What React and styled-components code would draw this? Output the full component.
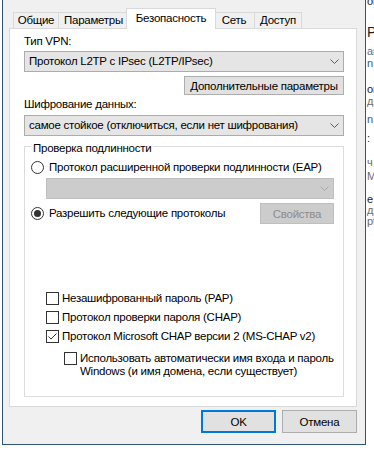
import React from "react";
import styled, { createGlobalStyle } from "styled-components";

const tabs = [
  { title: "Общие", width: 46, shift: 0 },
  { title: "Параметры", width: 71, shift: -1 },
  { title: "Безопасность", width: 90, shift: -3, active: true },
  { title: "Сеть", width: 42, shift: -3 },
  { title: "Доступ", width: 48, shift: -1 }
];

const protocols = [
  { label: "Незашифрованный пароль (PAP)" },
  { label: "Протокол проверки пароля (CHAP)" },
  { label: "Протокол Microsoft CHAP версии 2 (MS-CHAP v2)", checked: true }
];

// bits of the window that lies behind the dialog
const backdrop = [
  { text: "ol", gap: -4, tone: "dark" },
  { text: "PN", gap: 18, tone: "dark", big: true },
  { text: "ай", gap: 7, tone: "grey" },
  { text: "n U", gap: 1, tone: "blue" },
  { text: "ов", gap: 15, tone: "dark" },
  { text: "ди", gap: 1, tone: "grey" },
  { text: "n V", gap: 7, tone: "blue" },
  { text: ":", gap: 8, tone: "dark" },
  { text: "ч", gap: 13, tone: "grey" },
  { text: "Mi", gap: 3, tone: "grey" },
  { text: "е", gap: 12, tone: "dark" },
  { text: "ди", gap: 0, tone: "grey" },
  { text: "pt", gap: 0, tone: "grey" }
];

const tones = { dark: "#1b1b1b", grey: "#6b6b6b", blue: "#2f5f8e" };

const Chevron = ({ disabled }) => (
  <svg width="9" height="5" viewBox="0 0 9 5">
    <polyline
      points="0.5,0.5 4.5,4.5 8.5,0.5"
      fill="none"
      stroke={disabled ? "#a8a8a8" : "#5a5a5a"}
      strokeWidth="1"
    />
  </svg>
);

const Combo = ({ value, disabled }) => (
  <ComboBox disabled={disabled}>
    <ComboText>{value}</ComboText>
    <Chevron disabled={disabled} />
  </ComboBox>
);

const CheckBox = ({ checked }) => (
  <Box>
    {checked && (
      <svg width="11" height="11" viewBox="0 0 11 11">
        <polyline
          points="1.5,5.5 4,8 9.5,2.5"
          fill="none"
          stroke="#333"
          strokeWidth="1"
        />
      </svg>
    )}
  </Box>
);

export default function App() {
  return (
    <>
      <GlobalStyle />
      <Screen>
        <Dialog>
          <TabStrip>
            {tabs.map(tab => (
              <Tab
                key={tab.title}
                $width={tab.width}
                $shift={tab.shift}
                $active={tab.active}
              >
                {tab.title}
              </Tab>
            ))}
          </TabStrip>

          <Panel>
            <Label>Тип VPN:</Label>
            <Combo value="Протокол L2TP с IPsec (L2TP/IPsec)" />
            <Button $width={160} $height={19} $gap={4} $right>
              Дополнительные параметры
            </Button>
            <Label $gap={2}>Шифрование данных:</Label>
            <Gap $h={3} />
            <Combo value="самое стойкое (отключиться, если нет шифрования)" />

            <Group>
              <Legend>Проверка подлинности</Legend>
              <OptionRow $gap={6}>
                <Radio />
                <OptionText>
                  Протокол расширенной проверки подлинности (EAP)
                </OptionText>
              </OptionRow>
              <Indent $gap={3}>
                <Combo disabled value="" />
              </Indent>
              <PairRow>
                <OptionRow>
                  <Radio $checked />
                  <OptionText>Разрешить следующие протоколы</OptionText>
                </OptionRow>
                <Button $width={74} $height={21} disabled>
                  Свойства
                </Button>
              </PairRow>

              <CheckList>
                {protocols.map(p => (
                  <CheckRow key={p.label}>
                    <CheckBox checked={p.checked} />
                    <CheckText>{p.label}</CheckText>
                  </CheckRow>
                ))}
                <CheckRow $nested>
                  <CheckBox />
                  <CheckText $wrap>
                    Использовать автоматически имя входа и пароль
                    <br />
                    Windows (и имя домена, если существует)
                  </CheckText>
                </CheckRow>
              </CheckList>
            </Group>
          </Panel>

          <Footer>
            <Button $width={75} $height={23} $default>
              OK
            </Button>
            <Button $width={75} $height={23}>
              Отмена
            </Button>
          </Footer>
        </Dialog>

        <Behind>
          {backdrop.map((line, i) => (
            <Scrap key={i} $gap={line.gap} $tone={line.tone} $big={line.big}>
              {line.text}
            </Scrap>
          ))}
        </Behind>
      </Screen>
    </>
  );
}

const GlobalStyle = createGlobalStyle`
  html, body {
    margin: 0;
    padding: 0;
    background: #fff;
  }
  body {
    font-family: "Liberation Sans", Arial, sans-serif;
    font-size: 11.5px;
    letter-spacing: -0.25px;
    color: #000;
  }
`;

const Screen = styled.div`
  display: flex;
  width: 374px;
  height: 453px;
  overflow: hidden;
  background: #fff;
`;

const Dialog = styled.div`
  box-sizing: border-box;
  flex: none;
  width: 364px;
  height: 445px;
  margin-left: 2px;
  border: 1px solid #2f5677;
  border-top: none;
  background: #f0f0f0;
  display: flex;
  flex-direction: column;
  padding: 8px 8px 0 6px;
`;

const TabStrip = styled.div`
  display: flex;
  align-items: flex-end;
  height: 20px;
  padding-left: 4px;
`;

const Tab = styled.div`
  box-sizing: border-box;
  position: relative;
  z-index: ${p => (p.$active ? 2 : 1)};
  width: ${p => p.$width}px;
  height: ${p => (p.$active ? 21 : 16)}px;
  margin-left: ${p => p.$shift}px;
  margin-bottom: ${p => (p.$active ? -1 : 0)}px;
  border: 1px solid #d9d9d9;
  border-bottom: none;
  background: ${p => (p.$active ? "#fff" : "#f0f0f0")};
  text-align: center;
  line-height: ${p => (p.$active ? 18 : 14)}px;
  white-space: nowrap;
`;

const Panel = styled.div`
  box-sizing: border-box;
  display: flex;
  flex-direction: column;
  height: 379px;
  border: 1px solid #d9d9d9;
  background: #fff;
  padding: 5px 12px 0 14px;
`;

const Label = styled.div`
  line-height: 15px;
  margin-top: ${p => p.$gap || 0}px;
  margin-bottom: 2px;
`;

const Gap = styled.div`
  height: ${p => p.$h}px;
  margin-top: -2px;
`;

const ComboBox = styled.div`
  box-sizing: border-box;
  display: flex;
  align-items: center;
  justify-content: space-between;
  height: 21px;
  padding: 0 4px 0 4px;
  border: 1px solid ${p => (p.disabled ? "#bfbfbf" : "#acacac")};
  background: ${p => (p.disabled ? "#cccccc" : "#e5e5e5")};
`;

const ComboText = styled.span`
  white-space: nowrap;
  line-height: 15px;
`;

const Button = styled.div`
  box-sizing: border-box;
  display: flex;
  align-items: center;
  justify-content: center;
  flex: none;
  width: ${p => p.$width}px;
  height: ${p => p.$height}px;
  margin-top: ${p => p.$gap || 0}px;
  align-self: ${p => (p.$right ? "flex-end" : "auto")};
  border: ${p =>
    p.$default
      ? "2px solid #0078d7"
      : p.disabled
      ? "1px solid #bfbfbf"
      : "1px solid #adadad"};
  background: ${p => (p.disabled ? "#cccccc" : "#e1e1e1")};
  color: ${p => (p.disabled ? "#8d8d8d" : "#000")};
  white-space: nowrap;
`;

const Group = styled.fieldset`
  box-sizing: border-box;
  min-width: 0;
  height: 258px;
  margin: 3px 0 0;
  padding: 0 9px 0 6px;
  border: 1px solid #dcdcdc;
  display: flex;
  flex-direction: column;
`;

const Legend = styled.legend`
  padding: 3px 2px 0;
  line-height: 12px;
`;

const OptionRow = styled.div`
  display: flex;
  align-items: center;
  height: 15px;
  margin-top: ${p => p.$gap || 0}px;
`;

const Radio = styled.span`
  box-sizing: border-box;
  display: flex;
  align-items: center;
  justify-content: center;
  flex: none;
  width: 13px;
  height: 13px;
  border: 1px solid #333;
  border-radius: 50%;
  background: #fff;

  &::after {
    content: "";
    display: ${p => (p.$checked ? "block" : "none")};
    width: 7px;
    height: 7px;
    border-radius: 50%;
    background: #333;
  }
`;

const OptionText = styled.span`
  margin-left: 5px;
  white-space: nowrap;
  line-height: 15px;
`;

const Indent = styled.div`
  margin: ${p => p.$gap || 0}px 0 0 15px;
`;

const PairRow = styled.div`
  display: flex;
  align-items: center;
  justify-content: space-between;
  margin-top: 4px;
`;

const CheckList = styled.div`
  display: flex;
  flex-direction: column;
  gap: 4px;
  margin: 67px 0 0 15px;
`;

const CheckRow = styled.div`
  display: flex;
  align-items: ${p => (p.$nested ? "flex-start" : "center")};
  min-height: 15px;
  margin-left: ${p => (p.$nested ? 18 : 0)}px;
  margin-top: ${p => (p.$nested ? 4 : 0)}px;
`;

const Box = styled.span`
  box-sizing: border-box;
  display: flex;
  align-items: center;
  justify-content: center;
  flex: none;
  width: 13px;
  height: 13px;
  border: 1px solid #333;
  background: #fff;
`;

const CheckText = styled.span`
  margin-left: 3px;
  white-space: nowrap;
  line-height: ${p => (p.$wrap ? 13 : 15)}px;
`;

const Footer = styled.div`
  display: flex;
  justify-content: flex-end;
  gap: 6px;
  margin-top: 3px;
`;

const Behind = styled.div`
  flex: 1;
  display: flex;
  flex-direction: column;
  overflow: hidden;
  padding-left: 1px;
  white-space: nowrap;
  letter-spacing: 0;
`;

const Scrap = styled.div`
  margin-top: ${p => p.$gap}px;
  font-size: ${p => (p.$big ? 14 : 11)}px;
  line-height: ${p => (p.$big ? 14 : 11)}px;
  color: ${p => tones[p.$tone]};
`;
